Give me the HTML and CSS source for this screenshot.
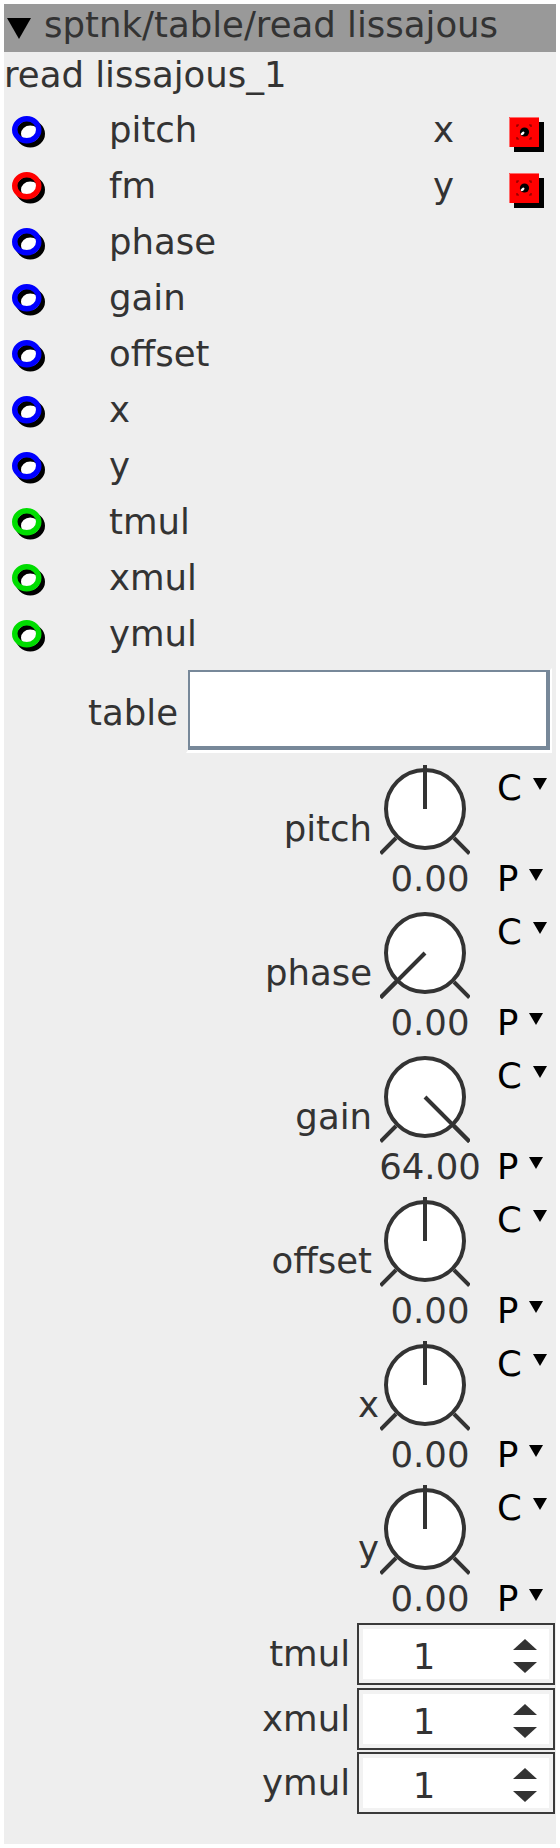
FILE: index.html
```html
<!DOCTYPE html>
<html>
<head>
<meta charset="utf-8">
<link rel="stylesheet" href="styles.css">
</head>
<body>
<svg class="defs" width="0" height="0" aria-hidden="true">
  <defs>
    <symbol id="ring" viewBox="0 0 36 34">
      <ellipse cx="14.75" cy="13.75" rx="9" ry="8" fill="#fff"/>
      <ellipse cx="18.25" cy="17.75" rx="12" ry="11" fill="none" stroke="#000" stroke-width="5.5"/>
      <ellipse cx="14.75" cy="13.75" rx="12" ry="11" fill="none" stroke="currentColor" stroke-width="5.5"/>
    </symbol>
    <symbol id="outsq" viewBox="0 0 36 36">
      <rect x="5" y="5" width="30" height="30" fill="#000"/>
      <rect x="0" y="0" width="30" height="30" fill="#ff0000"/>
      <path d="M0.5 30 V0.5 H30" fill="none" stroke="#ff6a6a" stroke-width="1"/>
      <path d="M8 10 V8 H10 M20 8 H22 V10 M22 20 V22 H20 M10 22 H8 V20" fill="none" stroke="#7a0000" stroke-width="1.2"/>
      <circle cx="15.5" cy="15" r="4.6" fill="#000"/>
      <ellipse cx="13.6" cy="16.4" rx="2.2" ry="1.3" transform="rotate(-40 13.6 16.4)" fill="#fff"/>
    </symbol>
    <symbol id="knob-up" viewBox="0 0 90 90">
      <circle cx="45" cy="44" r="39" fill="#fff" stroke="#333" stroke-width="4"/>
      <path d="M16 73 L0.5 88.5 M74 73 L89.5 88.5" stroke="#333" stroke-width="4" fill="none"/>
      <path d="M45 44 V0" stroke="#333" stroke-width="4" fill="none"/>
    </symbol>
    <symbol id="knob-left" viewBox="0 0 90 90">
      <circle cx="45" cy="44" r="39" fill="#fff" stroke="#333" stroke-width="4"/>
      <path d="M16 73 L0.5 88.5 M74 73 L89.5 88.5" stroke="#333" stroke-width="4" fill="none"/>
      <path d="M45 44 L0.5 88.5" stroke="#333" stroke-width="4" fill="none"/>
    </symbol>
    <symbol id="knob-right" viewBox="0 0 90 90">
      <circle cx="45" cy="44" r="39" fill="#fff" stroke="#333" stroke-width="4"/>
      <path d="M16 73 L0.5 88.5 M74 73 L89.5 88.5" stroke="#333" stroke-width="4" fill="none"/>
      <path d="M45 44 L89.5 88.5" stroke="#333" stroke-width="4" fill="none"/>
    </symbol>
  </defs>
</svg>

<div class="node">
  <div class="header"><span class="hdr-tri"></span><span class="hdr-title">sptnk/table/read lissajous</span></div>
  <div class="name">read lissajous_1</div>

  <div class="ports">
    <div class="port"><svg class="inlet c-blue"><use href="#ring"/></svg><span class="plabel">pitch</span><span class="olabel">x</span><svg class="outlet"><use href="#outsq"/></svg></div>
    <div class="port"><svg class="inlet c-red"><use href="#ring"/></svg><span class="plabel">fm</span><span class="olabel">y</span><svg class="outlet"><use href="#outsq"/></svg></div>
    <div class="port"><svg class="inlet c-blue"><use href="#ring"/></svg><span class="plabel">phase</span></div>
    <div class="port"><svg class="inlet c-blue"><use href="#ring"/></svg><span class="plabel">gain</span></div>
    <div class="port"><svg class="inlet c-blue"><use href="#ring"/></svg><span class="plabel">offset</span></div>
    <div class="port"><svg class="inlet c-blue"><use href="#ring"/></svg><span class="plabel">x</span></div>
    <div class="port"><svg class="inlet c-blue"><use href="#ring"/></svg><span class="plabel">y</span></div>
    <div class="port"><svg class="inlet c-green"><use href="#ring"/></svg><span class="plabel">tmul</span></div>
    <div class="port"><svg class="inlet c-green"><use href="#ring"/></svg><span class="plabel">xmul</span></div>
    <div class="port"><svg class="inlet c-green"><use href="#ring"/></svg><span class="plabel">ymul</span></div>
  </div>

  <div class="table-row">
    <span class="tlabel">table</span>
    <div class="tbox"><div class="tinner"></div></div>
  </div>

  <div class="knob">
    <span class="klabel">pitch</span>
    <svg class="kdial"><use href="#knob-up"/></svg>
    <span class="kmode kc">C<span class="dd"></span></span>
    <span class="kval">0.00</span>
    <span class="kmode kp">P<span class="dd"></span></span>
  </div>
  <div class="knob">
    <span class="klabel">phase</span>
    <svg class="kdial"><use href="#knob-left"/></svg>
    <span class="kmode kc">C<span class="dd"></span></span>
    <span class="kval">0.00</span>
    <span class="kmode kp">P<span class="dd"></span></span>
  </div>
  <div class="knob">
    <span class="klabel">gain</span>
    <svg class="kdial"><use href="#knob-right"/></svg>
    <span class="kmode kc">C<span class="dd"></span></span>
    <span class="kval">64.00</span>
    <span class="kmode kp">P<span class="dd"></span></span>
  </div>
  <div class="knob">
    <span class="klabel">offset</span>
    <svg class="kdial"><use href="#knob-up"/></svg>
    <span class="kmode kc">C<span class="dd"></span></span>
    <span class="kval">0.00</span>
    <span class="kmode kp">P<span class="dd"></span></span>
  </div>
  <div class="knob">
    <span class="klabel short">x</span>
    <svg class="kdial"><use href="#knob-up"/></svg>
    <span class="kmode kc">C<span class="dd"></span></span>
    <span class="kval">0.00</span>
    <span class="kmode kp">P<span class="dd"></span></span>
  </div>
  <div class="knob">
    <span class="klabel short">y</span>
    <svg class="kdial"><use href="#knob-up"/></svg>
    <span class="kmode kc">C<span class="dd"></span></span>
    <span class="kval">0.00</span>
    <span class="kmode kp">P<span class="dd"></span></span>
  </div>

  <div class="spins">
    <div class="spin-row"><span class="slabel">tmul</span><div class="sbox"><span class="sval"><span>1</span></span><span class="sarrows"><span class="up"></span><span class="down"></span></span></div></div>
    <div class="spin-row"><span class="slabel">xmul</span><div class="sbox"><span class="sval"><span>1</span></span><span class="sarrows"><span class="up"></span><span class="down"></span></span></div></div>
    <div class="spin-row"><span class="slabel">ymul</span><div class="sbox"><span class="sval"><span>1</span></span><span class="sarrows"><span class="up"></span><span class="down"></span></span></div></div>
  </div>
</div>
</body>
</html>
```

FILE: styles.css
```css
body {
  margin: 0;
  background: #fff;
  font-family: "DejaVu Sans", "Liberation Sans", sans-serif;
  font-size: 35.5px;
  color: #333;
}

.defs {
  position: absolute;
  width: 0;
  height: 0;
  overflow: hidden;
}

.node {
  margin: 4px;
  width: 552px;
  height: 1840px;
  background: #eeeeee;
  display: flex;
  flex-direction: column;
}

/* header */
.header {
  height: 48px;
  flex: none;
  background: #999999;
  display: flex;
  align-items: flex-start;
}
.hdr-tri {
  width: 0;
  height: 0;
  border-left: 12.5px solid transparent;
  border-right: 12.5px solid transparent;
  border-top: 21px solid #000;
  margin: 14px 13px 0 3px;
}
.hdr-title {
  line-height: 42px;
  white-space: nowrap;
}

.name {
  line-height: 46px;
  margin-bottom: 4px;
  white-space: nowrap;
}

/* ports */
.port {
  height: 56px;
  display: flex;
  align-items: flex-start;
}
.inlet {
  width: 36px;
  height: 34px;
  margin: 14px 0 0 8px;
  flex: none;
}
.c-blue { color: #0000ff; }
.c-red { color: #ff0000; }
.c-green { color: #00dd00; }
.plabel {
  line-height: 56px;
  margin-left: 61px;
}
.olabel {
  line-height: 56px;
  margin-left: auto;
}
.outlet {
  width: 36px;
  height: 36px;
  margin: 15px 11px 0 55px;
  flex: none;
}

/* table */
.table-row {
  display: flex;
  justify-content: flex-end;
  align-items: center;
  gap: 8px;
  padding-right: 4px;
  margin-top: 6px;
  margin-bottom: 6px;
}
.tlabel {
  line-height: 46px;
  margin-top: 4px;
}
.tbox {
  width: 366px;
  height: 85px;
  box-sizing: border-box;
  border-style: solid;
  border-width: 2px 2px 3px 2px;
  border-color: transparent #fff #fff transparent;
}
.tinner {
  height: 100%;
  box-sizing: border-box;
  background: #fff;
  border-style: solid;
  border-color: #778899;
  border-width: 2px 4px 4px 2px;
}

/* knobs */
.knob {
  display: grid;
  grid-template-columns: 1fr 90px 27px 59px;
  grid-template-rows: 90px 48px;
  margin-top: 6px;
}
.klabel {
  grid-column: 1;
  grid-row: 1;
  justify-self: end;
  align-self: end;
  line-height: 46px;
  margin: 0 8px 3px 0;
  white-space: nowrap;
}
.klabel.short {
  margin-right: 1px;
}
.kdial {
  grid-column: 2;
  grid-row: 1;
  width: 90px;
  height: 90px;
  display: block;
}
.kmode {
  grid-column: 4;
  color: #000;
  white-space: nowrap;
}
.kc {
  grid-row: 1;
  align-self: start;
  line-height: 46px;
}
.kp {
  grid-row: 2;
  line-height: 48px;
}
.kval {
  grid-column: 2;
  grid-row: 2;
  justify-self: center;
  line-height: 48px;
  margin-left: 10px;
  white-space: nowrap;
}
.dd {
  display: inline-block;
  width: 0;
  height: 0;
  border-left: 7.5px solid transparent;
  border-right: 7.5px solid transparent;
  border-top: 12px solid #000;
  margin-left: 11px;
  vertical-align: 10px;
}

/* spin boxes */
.spins {
  display: flex;
  flex-direction: column;
  gap: 2.5px;
}
.spin-row {
  display: flex;
  justify-content: flex-end;
  align-items: center;
  gap: 7px;
  padding-right: 1px;
  height: 62px;
}
.slabel {
  line-height: 46px;
}
.sbox {
  width: 198px;
  height: 62px;
  box-sizing: border-box;
  border: 2px solid #3a3a3a;
  background: #fff;
  box-shadow: inset 0 0 0 4px #f2f2f2;
  display: flex;
  align-items: stretch;
}
.sval {
  width: 130px;
  display: flex;
  align-items: center;
  justify-content: center;
}
.sval span {
  margin-top: 6px;
  line-height: 46px;
}
.sarrows {
  flex: 1;
  display: flex;
  flex-direction: column;
  align-items: center;
  justify-content: center;
  gap: 12px;
  padding: 4px 0 0 7px;
}
.up {
  width: 0;
  height: 0;
  border-left: 12px solid transparent;
  border-right: 12px solid transparent;
  border-bottom: 11px solid #333;
}
.down {
  width: 0;
  height: 0;
  border-left: 12px solid transparent;
  border-right: 12px solid transparent;
  border-top: 11px solid #333;
}
```
